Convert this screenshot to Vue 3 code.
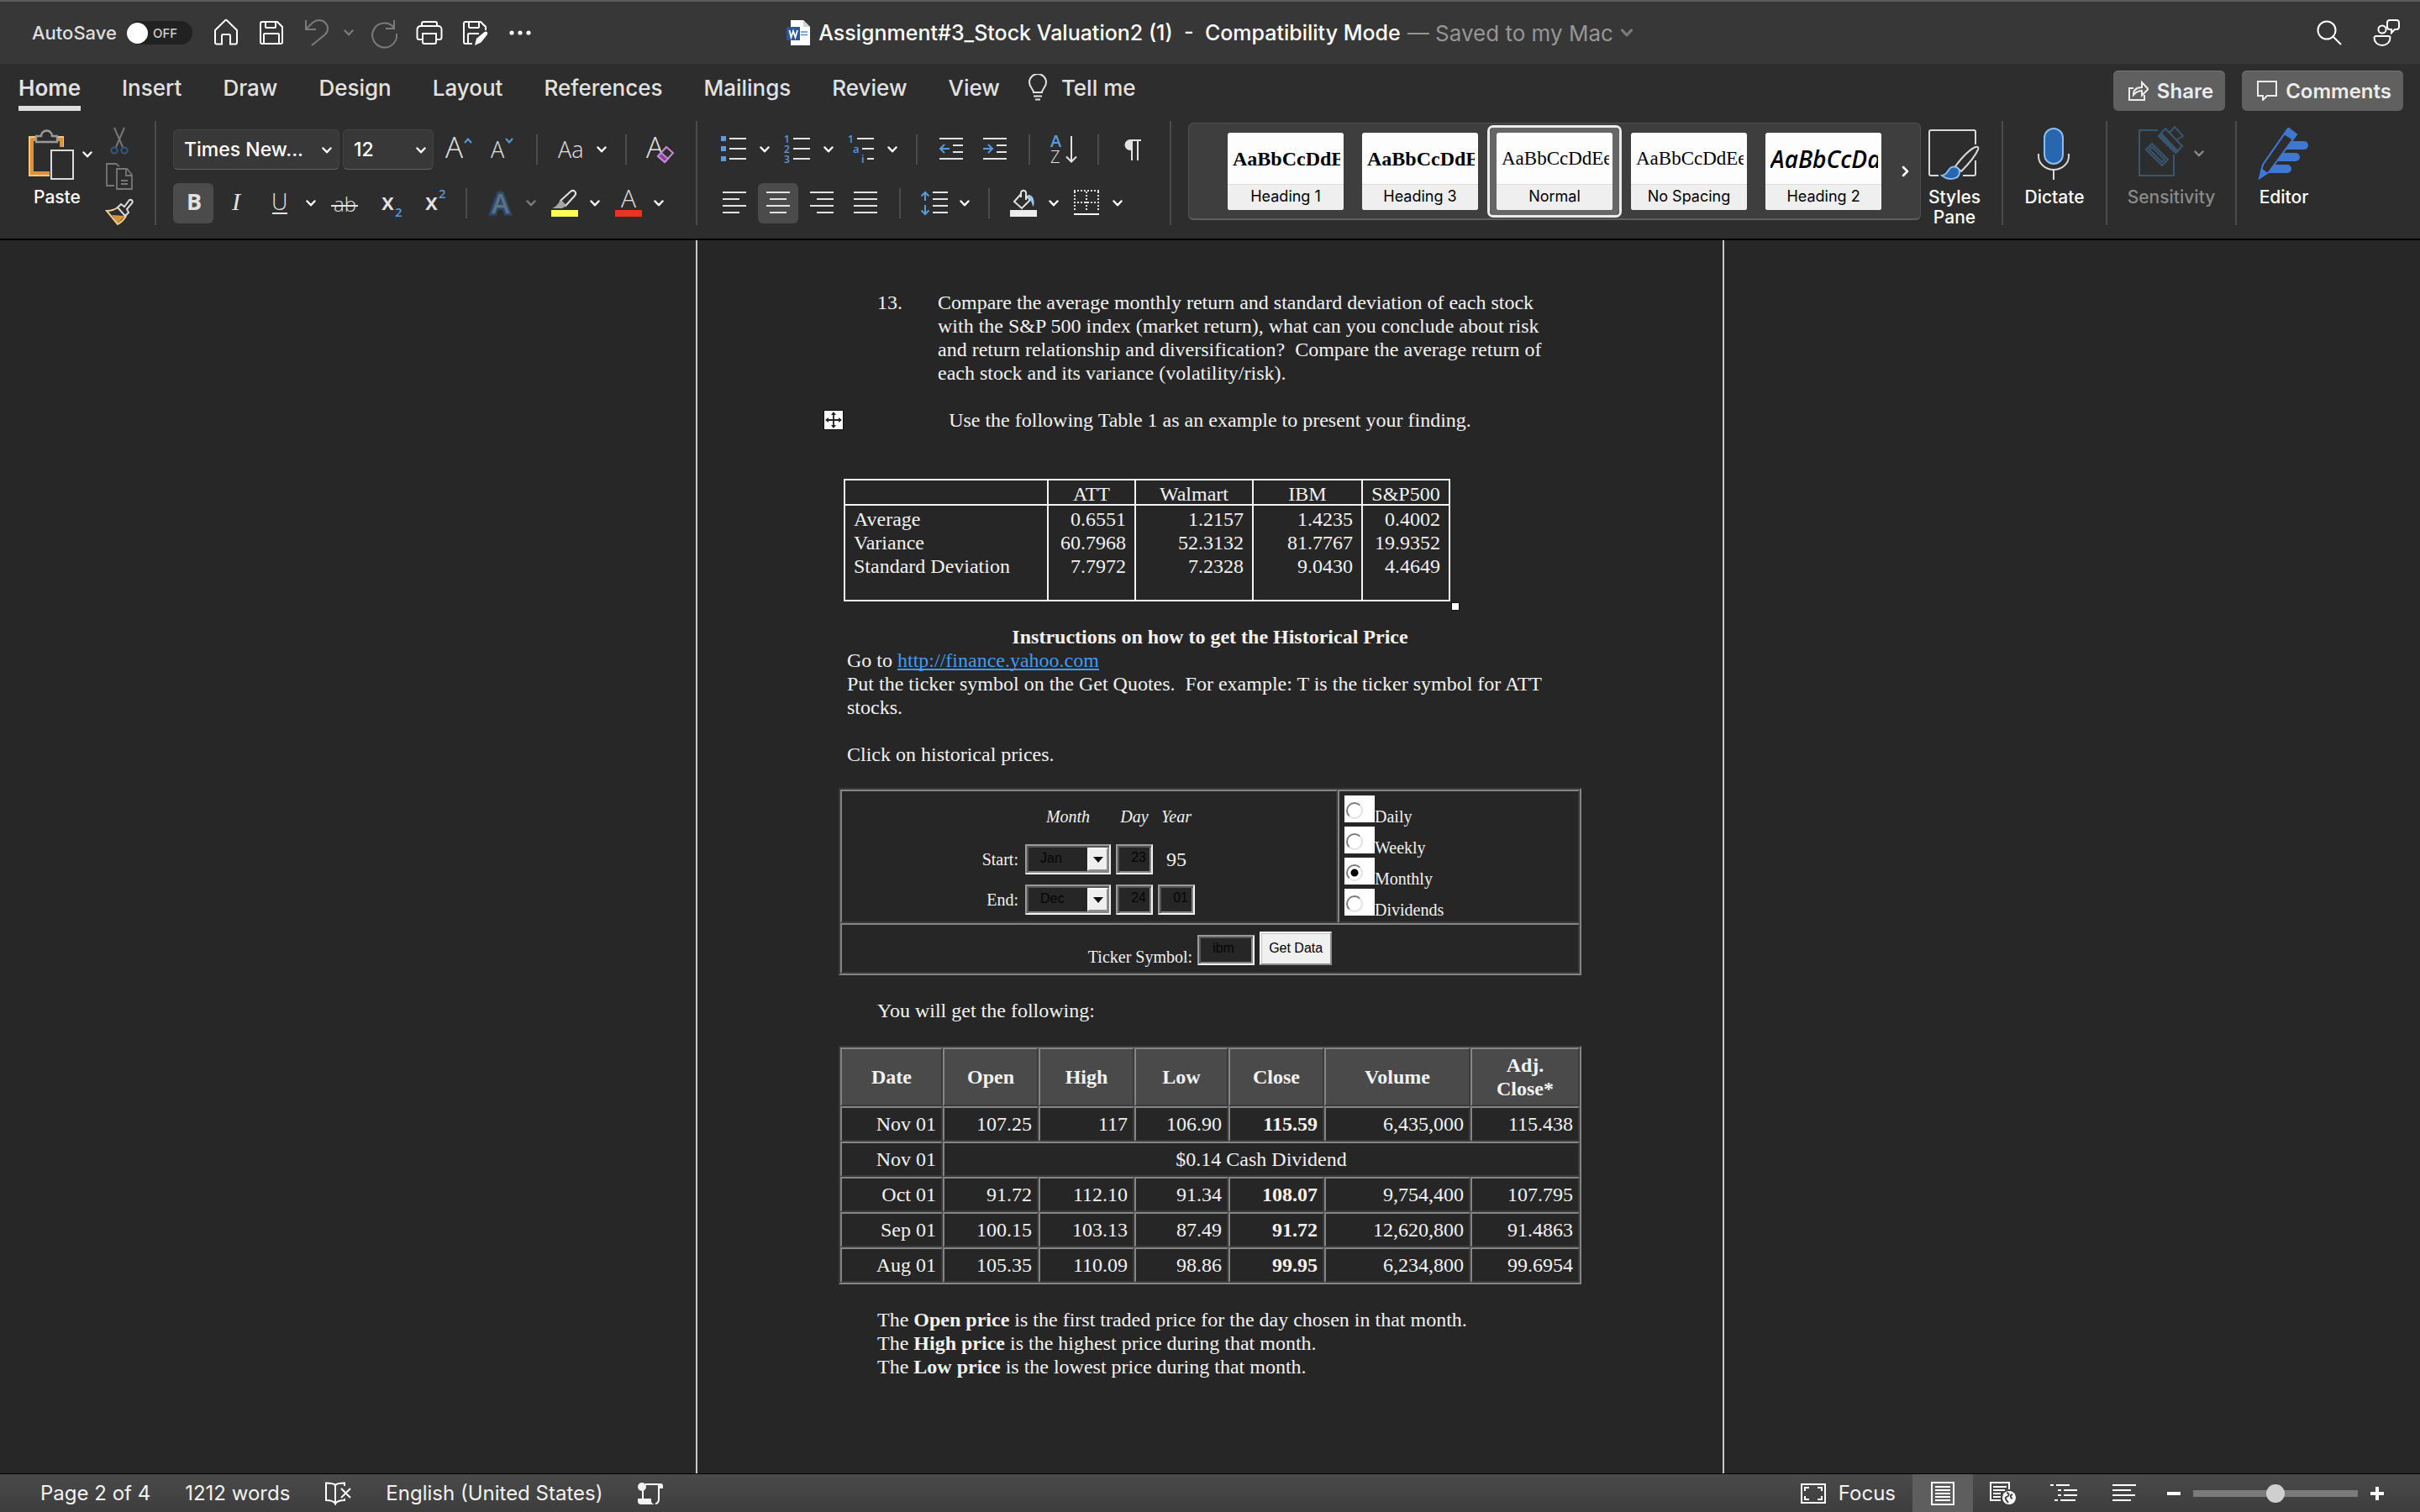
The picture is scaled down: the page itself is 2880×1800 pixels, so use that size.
<template>
  <div class="word">
    <!-- 公共图标 -->
    <svg class="defs" aria-hidden="true">
      <symbol id="chevron" viewBox="0 0 12 8">
        <path d="M1.5 1.5 6 6.3l4.5-4.8" fill="none" stroke="currentColor" stroke-width="2.4" stroke-linecap="round" stroke-linejoin="round" />
      </symbol>
    </svg>

    <!-- 标题栏 -->
    <header class="title-bar">
      <div class="quick-bar">
        <span id="autosave" class="autosave">AutoSave</span>
        <button class="switch" role="switch" aria-checked="false" aria-labelledby="autosave">
          <span class="knob"></span>OFF
        </button>
        <button class="icon-btn" aria-label="Home">
          <svg viewBox="0 0 32 32"><path d="M3 13 14.6 1.6a2 2 0 0 1 2.8 0L29 13v14.5a2 2 0 0 1-2 2h-6V19.5a1.500 1.500 0 0 0-1.500-1.500h-7a1.500 1.500 0 0 0-1.500 1.500v10H5a2 2 0 0 1-2-2z" /></svg>
        </button>
        <button class="icon-btn" aria-label="Save">
          <svg viewBox="0 0 32 32"><path d="M3 5a2 2 0 0 1 2-2h18l6 6v18a2 2 0 0 1-2 2H5a2 2 0 0 1-2-2zM9 3v6a1 1 0 0 0 1 1h10a1 1 0 0 0 1-1V3M7 29V18a1 1 0 0 1 1-1h16a1 1 0 0 1 1 1v11" /></svg>
        </button>
        <button class="icon-btn dim" aria-label="Undo">
          <svg viewBox="0 0 32 32"><path d="M3 1v11h12M3 12l8-8c5-4 11-4 15 0s4 10 0 14L10 31" /></svg>
        </button>
        <svg class="chev dim"><use href="#chevron" /></svg>
        <button class="icon-btn dim" aria-label="Redo">
          <svg viewBox="0 0 32 32"><path d="M28 10A14.500 14.500 0 1 0 31 17M28 1v10H18" /></svg>
        </button>
        <button class="icon-btn" aria-label="Print">
          <svg viewBox="0 0 32 32"><path d="M7 8V5a2 2 0 0 1 2-2h14a2 2 0 0 1 2 2v3M7 24H4a2.500 2.500 0 0 1-2.500-2.500V12A4 4 0 0 1 5.500 8h21a4 4 0 0 1 4 4v9.500A2.500 2.500 0 0 1 28 24h-3M8 17h16v10a2 2 0 0 1-2 2H10a2 2 0 0 1-2-2z" /></svg>
        </button>
        <button class="icon-btn" aria-label="Save as">
          <svg viewBox="0 0 32 32"><path d="M13 29H5a2 2 0 0 1-2-2V5a2 2 0 0 1 2-2h18l6 6v4M9 3v6a1 1 0 0 0 1 1h10a1 1 0 0 0 1-1V3M8 29V18a1 1 0 0 1 1-1h12" /><path d="m16 31 2-8 9.500-8c2-1.500 4.500.5 3.500 3l-7.500 9.500z" fill="currentColor" stroke="none" /></svg>
        </button>
        <button class="icon-btn" aria-label="More">
          <svg viewBox="0 0 32 32"><g fill="currentColor" stroke="none"><circle cx="6" cy="16" r="2.600" /><circle cx="16" cy="16" r="2.600" /><circle cx="26" cy="16" r="2.600" /></g></svg>
        </button>
      </div>

      <div class="doc-title">
        <svg class="doc-icon" viewBox="0 0 28 30">
          <path d="M5 0h15l8 8v22H5z" fill="#fff" />
          <path d="M20 0v8h8z" fill="#cfd3d8" />
          <path d="M17 14h8M17 17.500h8" stroke="#4a90d9" stroke-width="1.500" />
          <rect x="0" y="8" width="16" height="16" fill="#2b579a" />
          <path d="m3.500 12 2 8.500L8 13l2.500 7.500 2.500-8.500" fill="none" stroke="#fff" stroke-width="1.800" />
        </svg>
        <span class="doc-name">Assignment#3_Stock Valuation2 (1)&nbsp; -&nbsp; Compatibility Mode</span>
        <span class="doc-state">— Saved to my Mac</span>
        <svg class="chev wide dim"><use href="#chevron" /></svg>
      </div>

      <div class="title-right">
        <button class="icon-btn" aria-label="Search">
          <svg viewBox="0 0 32 32"><circle cx="13" cy="13" r="10.500" /><path d="m20.500 20.500 9.500 9.500" /></svg>
        </button>
        <button class="icon-btn" aria-label="Account">
          <svg viewBox="0 0 32 32"><circle cx="11" cy="12" r="4.600" /><path d="M3.500 20h15a2 2 0 0 1 2 2c0 5-4 9-9.500 9s-9.500-4-9.500-9a2 2 0 0 1 2-2zM20 1h8a3 3 0 0 1 3 3v5a3 3 0 0 1-3 3h-2l-4 4v-4h-2a3 3 0 0 1-3-3V4a3 3 0 0 1 3-3z" /></svg>
        </button>
      </div>
    </header>

    <!-- 功能区 -->
    <section class="ribbon">
      <nav class="tabs">
        <button v-for="tab in tabs" :key="tab" class="tab" :class="{ active: tab === activeTab }" @click="activeTab = tab">{{ tab }}</button>
        <button class="tab tell-me">
          <svg viewBox="0 0 24 32"><path d="M7 22c0-4-5-6-5-12a10 10 0 0 1 20 0c0 6-5 8-5 12zM7 26.500h10M9 30.500h6" /></svg>Tell me
        </button>
        <div class="tab-actions">
          <button class="action">
            <svg viewBox="0 0 24 24"><path d="M6 9H1v14h18v-6M6 17c0-6 4-9 10-9V2l7.500 8L16 17.500V12c-4 0-7 1.500-10 5z" /></svg>Share
          </button>
          <button class="action">
            <svg viewBox="0 0 24 24"><path d="M1 1h22v17H12l-5 5v-5H1z" /></svg>Comments
          </button>
        </div>
      </nav>

      <div class="groups">
        <div class="group clipboard">
          <div class="paste">
            <div class="paste-top">
              <svg class="paste-icon" viewBox="0 0 54 60">
                <path d="M9 9H1v46h24M34 9h7v12" fill="none" stroke="#f4c97c" stroke-width="2" />
                <path d="M10 12H4v40h21M34 12h5v9" fill="none" stroke="#d9933d" stroke-width="4" />
                <path d="M9 15V8h6a6.500 6.500 0 0 1 13 0h6v7z" fill="#2d2d2d" stroke="#9a9a9a" stroke-width="2.400" />
                <rect x="27" y="25" width="26" height="34" fill="#2d2d2d" stroke="#dcdcdc" stroke-width="2" />
              </svg>
              <svg class="chev-plain"><use href="#chevron" /></svg>
            </div>
            <button class="big-label">Paste</button>
          </div>
          <div class="clip-tools">
            <button class="icon-btn" aria-label="Cut">
              <svg viewBox="0 0 32 32"><path d="m10 1 10 23M22 1 12 24" stroke="#777" /><circle cx="10" cy="28" r="3.600" stroke="#35597d" /><circle cx="22" cy="28" r="3.600" stroke="#35597d" /></svg>
            </button>
            <button class="icon-btn" aria-label="Copy">
              <svg viewBox="0 0 32 32" stroke-width="1.800"><path d="M10 27H1V1h11l4 3M13 7h12l6 7v17H13zM24 7v8h7M18 21h8M18 25h8" stroke="#777" /></svg>
            </button>
            <button class="icon-btn" aria-label="Format painter">
              <svg viewBox="0 0 32 32"><path d="m7 19 16 1-9 9z" fill="#d9933d" stroke="none" /><path d="M14 10C10 13 6 14 1 14l13 16c5-3 8-6 10-10" stroke="#f4d08a" /><path d="m14 10 4-4 4 3 6-8c2-1 5 1 3 4l-6 7 2 4-4 4z" stroke="#dcdcdc" fill="#2d2d2d" /></svg>
            </button>
          </div>
        </div>

        <div class="group font">
          <div class="row">
            <div class="combos">
              <label class="combo family">
                <select aria-label="Font"><option>Times New...</option></select>
                <svg><use href="#chevron" /></svg>
              </label>
              <label class="combo size">
                <select aria-label="Font size"><option>12</option></select>
                <svg><use href="#chevron" /></svg>
              </label>
            </div>
            <button class="icon-btn" aria-label="Increase font size">
              <svg viewBox="0 0 32 32"><text class="glyph" x="0" y="26" font-size="35">A</text><path class="blue" d="m23 8 4-4.500L31 8" /></svg>
            </button>
            <button class="icon-btn" aria-label="Decrease font size">
              <svg viewBox="0 0 32 32"><text class="glyph" x="2" y="26" font-size="27">A</text><path class="blue" d="m20 3 4 4.500L28 3" /></svg>
            </button>
            <i class="sep"></i>
            <button class="icon-btn" aria-label="Change case">
              <svg viewBox="0 0 32 32"><text class="glyph" x="0" y="26" font-size="27">Aa</text></svg>
            </button>
            <svg class="chev"><use href="#chevron" /></svg>
            <i class="sep"></i>
            <button class="icon-btn" aria-label="Clear formatting">
              <svg viewBox="0 0 32 32"><text class="glyph" x="-1" y="26" font-size="35">A</text><path d="m13 24 10-11 8 7-10 11z" stroke="#c48ad0" fill="#2d2d2d" /><path d="m13 24 4-4 8 7-4 4z" fill="#8e3fa3" stroke="#c48ad0" /></svg>
            </button>
          </div>
          <div class="row">
            <button class="icon-btn on" aria-label="Bold">
              <svg viewBox="0 0 32 32"><text class="glyph heavy" x="8" y="24" font-size="27">B</text></svg>
            </button>
            <button class="icon-btn" aria-label="Italic">
              <svg viewBox="0 0 32 32"><text class="glyph serif" x="10" y="24" font-size="30">I</text></svg>
            </button>
            <button class="icon-btn" aria-label="Underline">
              <svg viewBox="0 0 32 32"><text class="glyph" x="5" y="24" font-size="27">U</text><path d="M6 28h18" /></svg>
            </button>
            <svg class="chev"><use href="#chevron" /></svg>
            <button class="icon-btn" aria-label="Strikethrough">
              <svg viewBox="0 0 32 32"><text class="glyph" x="3" y="26" font-size="24">ab</text><path d="M0 19h32" /></svg>
            </button>
            <button class="icon-btn" aria-label="Subscript">
              <svg viewBox="0 0 32 32"><text class="glyph mid" x="8" y="24" font-size="27">x</text><text class="glyph num" x="24" y="32" font-size="15">2</text></svg>
            </button>
            <button class="icon-btn" aria-label="Superscript">
              <svg viewBox="0 0 32 32"><text class="glyph mid" x="8" y="24" font-size="27">x</text><text class="glyph num" x="24" y="10" font-size="15">2</text></svg>
            </button>
            <i class="sep"></i>
            <button class="icon-btn" aria-label="Text effects">
              <svg viewBox="0 0 32 32"><text class="glyph effect" x="5" y="28" font-size="32">A</text></svg>
            </button>
            <svg class="chev dim"><use href="#chevron" /></svg>
            <button class="icon-btn" aria-label="Highlight colour">
              <svg viewBox="0 0 32 32"><path d="M11 13 23 2c4-3 8 1 5 5L17 19z" /><path d="m11 12 7 7-5 3H1c5-2 7-5 10-10z" fill="#a5a5a5" stroke="none" /><rect y="24" width="32" height="8" fill="#fffd54" stroke="none" /></svg>
            </button>
            <svg class="chev"><use href="#chevron" /></svg>
            <button class="icon-btn" aria-label="Font colour">
              <svg viewBox="0 0 32 32"><text class="glyph" x="7" y="21" font-size="30">A</text><rect y="24" width="32" height="8" fill="#e93323" stroke="none" /></svg>
            </button>
            <svg class="chev"><use href="#chevron" /></svg>
          </div>
        </div>

        <div class="group paragraph">
          <div class="row">
            <button class="icon-btn" aria-label="Bullets">
              <svg viewBox="0 0 32 32"><path d="M10 3h20M10 15h20M10 27h20" /><path d="M0 0h6v6H0zM0 12h6v6H0zM0 24h6v6H0z" fill="#5b9bd9" stroke="none" /></svg>
            </button>
            <svg class="chev"><use href="#chevron" /></svg>
            <button class="icon-btn" aria-label="Numbering">
              <svg viewBox="0 0 32 32"><path d="M10 3h20M10 15h20M10 27h20" /><text class="glyph num" x="-1" y="8" font-size="12">1</text><text class="glyph num" x="-1" y="20" font-size="12">2</text><text class="glyph num" x="-1" y="32" font-size="12">3</text></svg>
            </button>
            <svg class="chev"><use href="#chevron" /></svg>
            <button class="icon-btn" aria-label="Multilevel list">
              <svg viewBox="0 0 32 32"><path d="M10 3h20M16 15h14M22 27h8" /><text class="glyph num" x="-1" y="8" font-size="12">1</text><text class="glyph num" x="5" y="20" font-size="13">a</text><text class="glyph num" x="15" y="32" font-size="13">i</text></svg>
            </button>
            <svg class="chev"><use href="#chevron" /></svg>
            <i class="sep"></i>
            <button class="icon-btn" aria-label="Decrease indent">
              <svg viewBox="0 0 32 32"><path d="M2 3h28M18 11h12M18 19h12M2 27h28" /><path class="blue" d="M14 15H3M8 10l-5 5 5 5" /></svg>
            </button>
            <button class="icon-btn" aria-label="Increase indent">
              <svg viewBox="0 0 32 32"><path d="M2 3h28M18 11h12M18 19h12M2 27h28" /><path class="blue" d="M2 15h11M8 10l5 5-5 5" /></svg>
            </button>
            <i class="sep"></i>
            <button class="icon-btn" aria-label="Sort">
              <svg viewBox="0 0 32 32"><text class="glyph num" x="0" y="13" font-size="20">A</text><text class="glyph" x="0" y="32" font-size="20">Z</text><path d="M25 0v30M19 24.500l6 6 6-6" /></svg>
            </button>
            <i class="sep"></i>
            <button class="icon-btn" aria-label="Show formatting marks">
              <svg viewBox="0 0 32 32"><path d="M15 5v24M22 5v24M13 5h13" /><path d="M15 4h-2a6.500 6.500 0 0 0 0 13h2z" fill="currentColor" stroke="none" /></svg>
            </button>
          </div>
          <div class="row">
            <button class="icon-btn" aria-label="Align left">
              <svg viewBox="0 0 32 32"><path d="M2 3h28M2 11h20M2 19h28M2 27h20" /></svg>
            </button>
            <button class="icon-btn on" aria-label="Centre">
              <svg viewBox="0 0 32 32"><path d="M2 3h28M6 11h20M2 19h28M6 27h20" /></svg>
            </button>
            <button class="icon-btn" aria-label="Align right">
              <svg viewBox="0 0 32 32"><path d="M2 3h28M10 11h20M2 19h28M10 27h20" /></svg>
            </button>
            <button class="icon-btn" aria-label="Justify">
              <svg viewBox="0 0 32 32"><path d="M2 3h28M2 11h28M2 19h28M2 27h28" /></svg>
            </button>
            <i class="sep"></i>
            <button class="icon-btn" aria-label="Line spacing">
              <svg viewBox="0 0 32 32"><path d="M14 3h18M14 11h18M14 19h18M14 27h18" /><path class="blue" d="M5 13V3M.5 7.500 5 3l4.500 4.500M5 18v11M.5 24.500 5 29l4.500-4.500" /></svg>
            </button>
            <svg class="chev"><use href="#chevron" /></svg>
            <i class="sep"></i>
            <button class="icon-btn" aria-label="Shading">
              <svg viewBox="0 0 32 32"><path d="M13 5 5 14l9 8 10-10-5-5M13 9V3c1-3 5-3 6 0v9" /><path d="M21 6c6-1 9 6 7 14-3-3-1-8-7-10z" fill="#9cc3ea" stroke="none" /><rect y="24" width="32" height="8" fill="#ececec" stroke="none" /></svg>
            </button>
            <svg class="chev"><use href="#chevron" /></svg>
            <button class="icon-btn" aria-label="Borders">
              <svg viewBox="0 0 32 32"><path d="M0 1h30M0 15h30M1 2v24M15 2v24M29 2v24" stroke-dasharray="2 2" /><path d="M0 29h30" stroke="#fff" /></svg>
            </button>
            <svg class="chev"><use href="#chevron" /></svg>
          </div>
        </div>

        <div class="gallery">
          <button v-for="item in styles" :key="item.name" class="style-card" :class="[item.kind, { selected: item.name === 'Normal' }]">
            <span class="sample">AaBbCcDdEe</span>
            <span class="style-name">{{ item.name }}</span>
          </button>
          <button class="gallery-next" aria-label="More styles">
            <svg viewBox="0 0 10 14"><path d="m2 2 5 5-5 5" fill="none" stroke="#fff" stroke-width="2.600" stroke-linecap="round" stroke-linejoin="round" /></svg>
          </button>
        </div>

        <button class="big-tool pane">
          <svg viewBox="0 0 62 60">
            <path d="M56 18V3a2 2 0 0 0-2-2H3a2 2 0 0 0-2 2v50a2 2 0 0 0 2 2h9M41 55h13a2 2 0 0 0 2-2V37" />
            <path d="M32 44C41 32 49 24 56 21c3-1 4 1 3 3-3 7-11 17-20 26z" fill="#2d2d2d" />
            <path d="M16 55c6-1 6-4 9-8 4-5 12-2 12 4 0 8-12 11-21 4z" fill="#2866b0" stroke="#8bbcf0" />
          </svg>
          <span>Styles<br>Pane</span>
        </button>
        <button class="big-tool dictate">
          <svg viewBox="0 0 62 60">
            <rect x="19" y="-1" width="22" height="42" rx="11" fill="#2866b0" stroke="#8bbcf0" />
            <path d="M12 29v3a18 16 0 0 0 36 0v-3M30 48v12" />
          </svg>
          <span>Dictate</span>
        </button>
        <button class="big-tool sensitivity">
          <span class="with-chev">
            <svg viewBox="0 0 54 60" stroke="#3a556e">
              <path d="M23 1H1v54h41V30" />
              <path d="m9 24 7-7 19 19-7 7zM13 24l3-3 15 15-3 3z" />
              <path d="M24 8 32-1l20 21-8 8zM37 4l6-7 10 11-7 4" />
              <path d="m24 8 4-2 19 20-3 2z" fill="#3a556e" />
            </svg>
            <svg class="chev-plain"><use href="#chevron" /></svg>
          </span>
          <span>Sensitivity</span>
        </button>
        <button class="big-tool editor">
          <svg viewBox="0 0 62 60">
            <path d="M37 14h18a5 5 0 0 1 0 10H30zM28 28h17a5 5 0 0 1 0 10H21zM18 42h17a5 5 0 0 1 0 10H12z" fill="#3f78d0" stroke="none" />
            <path d="M2 58 6 42 36-1l10 7-33 45z" fill="#2d2d2d" stroke="#3f78d0" />
            <path d="m31 6 6-8 10 8-5 7zM1 60l3-14 8 6z" fill="#3f78d0" stroke="none" />
          </svg>
          <span>Editor</span>
        </button>
      </div>
    </section>

    <!-- 文档区域 -->
    <main class="canvas">
      <article class="page">
        <div class="question">
          <span>13.</span>
          <p>
            Compare the average monthly return and standard deviation of each stock<br>
            with the S&amp;P 500 index (market return), what can you conclude about risk<br>
            and return relationship and diversification?&nbsp; Compare the average return of<br>
            each stock and its variance (volatility/risk).
          </p>
        </div>

        <p class="table-lead">
          <svg class="move-handle" viewBox="0 0 24 24">
            <rect x=".5" y=".5" width="23" height="23" fill="#fff" stroke="#111" />
            <path d="M12 4v16M4 12h16" stroke="#222" stroke-width="1.800" />
            <path d="m12 2 3 4H9zM12 22l3-4H9zM2 12l4-3v6zM22 12l-4-3v6z" fill="#222" />
          </svg>
          Use the following Table 1 as an example to present your finding.
        </p>

        <div class="stats-wrap">
          <table class="stats">
            <colgroup><col class="c-label"><col class="c-att"><col class="c-wal"><col class="c-ibm"><col class="c-att"></colgroup>
            <thead>
              <tr><th></th><th>ATT</th><th>Walmart</th><th>IBM</th><th>S&amp;P500</th></tr>
            </thead>
            <tbody>
              <tr v-for="row in stats" :key="row[0]">
                <td v-for="cell in row" :key="cell">{{ cell }}</td>
              </tr>
            </tbody>
          </table>
          <i class="resize-handle"></i>
        </div>

        <h2>Instructions on how to get the Historical Price</h2>
        <p>Go to <a href="http://finance.yahoo.com">http://finance.yahoo.com</a></p>
        <p>Put the ticker symbol on the Get Quotes.&nbsp; For example: T is the ticker symbol for ATT<br>stocks.</p>
        <p class="click">Click on historical prices.</p>

        <!-- 历史价格查询表单 -->
        <form class="query" @submit.prevent>
          <div class="cell dates">
            <em></em><em>Month</em><em>Day</em><em>Year</em>
            <label for="start-month">Start:</label>
            <span class="drop"><select id="start-month"><option>Jan</option></select><i></i></span>
            <input value="23" aria-label="Start day">
            <span class="year">95</span>
            <label for="end-month">End:</label>
            <span class="drop"><select id="end-month"><option>Dec</option></select><i></i></span>
            <input value="24" aria-label="End day">
            <input value="01" aria-label="End year">
          </div>
          <div class="cell periods">
            <label v-for="p in periods" :key="p">
              <input v-model="period" type="radio" name="period" :value="p">{{ p }}
            </label>
          </div>
          <div class="cell ticker">
            <label for="ticker">Ticker Symbol:</label>
            <input id="ticker" value="ibm">
            <button>Get Data</button>
          </div>
        </form>

        <p class="indent">You will get the following:</p>

        <table class="prices">
          <colgroup><col v-for="n in 7" :key="n" :class="'p' + n"></colgroup>
          <thead>
            <tr><th>Date</th><th>Open</th><th>High</th><th>Low</th><th>Close</th><th>Volume</th><th>Adj.<br>Close*</th></tr>
          </thead>
          <tbody>
            <tr v-for="(row, i) in prices" :key="i">
              <template v-if="row.length > 2">
                <td v-for="(cell, j) in row" :key="j" :class="{ close: j === 4 }">{{ cell }}</td>
              </template>
              <template v-else>
                <td>{{ row[0] }}</td>
                <td class="dividend" colspan="6">{{ row[1] }}</td>
              </template>
            </tr>
          </tbody>
        </table>

        <p class="indent">
          The <b>Open price</b> is the first traded price for the day chosen in that month.<br>
          The <b>High price</b> is the highest price during that month.<br>
          The <b>Low price</b> is the lowest price during that month.
        </p>
      </article>
    </main>

    <!-- 状态栏 -->
    <footer class="status">
      <div class="status-left">
        <span>Page 2 of 4</span>
        <span>1212 words</span>
        <svg viewBox="0 0 32 28"><path d="M13 26V4c-2-2-7-2.500-11-2.500V22c5 0 9 .5 11 4zM13 4c2-2 6-2.500 11-2.500V5M13 26c2-3 5-4 11-4v-2M20 8l11 11M31 8 20 19" /></svg>
        <span>English (United States)</span>
        <svg viewBox="0 0 32 28"><path d="M7 10v12M10 3h16v17c0 3-1 6-4 6" /><circle cx="6" cy="6" r="5" fill="currentColor" stroke="none" /><path d="M24 2h4a3 3 0 0 1 3 3v3h-5zM1 20h16v3c0 2 2 4 5 4H5a4 4 0 0 1-4-4z" fill="currentColor" stroke="none" /></svg>
      </div>
      <div class="status-right">
        <button class="focus">
          <svg viewBox="0 0 32 24"><path d="M2 1h28v22H2zM6 9V5h5M21 5h5v4M26 15v4h-5M11 19H6v-4" /></svg>Focus
        </button>
        <button class="view on" aria-label="Print layout">
          <svg viewBox="0 0 32 28"><path d="M3 1h26v26H3zM7 6h18M7 10h18M7 14h18M7 18h18M7 22h18" /></svg>
        </button>
        <button class="view" aria-label="Web layout">
          <svg viewBox="0 0 32 28"><path d="M13 22H1V1h22v8M4 6h16M4 10h14M4 14h9M4 18h9" /><circle cx="23" cy="19" r="8" fill="#fff" stroke="none" /><path d="M20 13c4 1 3 4 0 5s0 4 2 7M27 15c-3 1-3 4 0 5" stroke="#444" /></svg>
        </button>
        <button class="view" aria-label="Outline">
          <svg viewBox="0 0 32 28"><path d="M0 4h4M7 4h16M9 10h4M16 10h16M9 16h4M16 16h16M5 22h4M12 22h18" /></svg>
        </button>
        <button class="view" aria-label="Draft">
          <svg viewBox="0 0 32 28"><path d="M2 4h28M2 10h22M2 16h27M2 22h22" /></svg>
        </button>
        <div class="zoom-box">
          <button class="zoom-btn" aria-label="Zoom out"><svg viewBox="0 0 18 18"><path d="M1 9h16" /></svg></button>
          <input v-model="zoom" class="zoom" type="range" min="0" max="100" aria-label="Zoom">
          <button class="zoom-btn" aria-label="Zoom in"><svg viewBox="0 0 18 18"><path d="M1 9h16M9 1v16" /></svg></button>
        </div>
      </div>
    </footer>
  </div>
</template>

<script setup>
import { ref } from 'vue'

const tabs = ['Home', 'Insert', 'Draw', 'Design', 'Layout', 'References', 'Mailings', 'Review', 'View']
const activeTab = ref('Home')

const styles = [
  { name: 'Heading 1', kind: 'bold' },
  { name: 'Heading 3', kind: 'bold' },
  { name: 'Normal', kind: 'plain' },
  { name: 'No Spacing', kind: 'plain' },
  { name: 'Heading 2', kind: 'slanted' }
]

const stats = [
  ['Average', '0.6551', '1.2157', '1.4235', '0.4002'],
  ['Variance', '60.7968', '52.3132', '81.7767', '19.9352'],
  ['Standard Deviation', '7.7972', '7.2328', '9.0430', '4.4649']
]

const periods = ['Daily', 'Weekly', 'Monthly', 'Dividends']
const period = ref('Monthly')

// 两列的行为分红记录
const prices = [
  ['Nov 01', '107.25', '117', '106.90', '115.59', '6,435,000', '115.438'],
  ['Nov 01', '$0.14 Cash Dividend'],
  ['Oct 01', '91.72', '112.10', '91.34', '108.07', '9,754,400', '107.795'],
  ['Sep 01', '100.15', '103.13', '87.49', '91.72', '12,620,800', '91.4863'],
  ['Aug 01', '105.35', '110.09', '98.86', '99.95', '6,234,800', '99.6954']
]

const zoom = ref(50)
</script>

<style>
body {
  background: #262626;
}
</style>

<style scoped>
* {
  box-sizing: border-box;
}

.word {
  display: flex;
  flex-direction: column;
  height: 100vh;
  overflow: hidden;
  background: #272727;
  color: #e2e2e2;
  font-family: Inter, 'Liberation Sans', sans-serif;
  font-size: 26px;
}

.defs {
  position: absolute;
  width: 0;
  height: 0;
}

button {
  padding: 0;
  border: none;
  background: none;
  color: inherit;
  font: inherit;
}

svg {
  display: block;
  flex-shrink: 0;
}

/* 标题栏 */
.title-bar {
  display: grid;
  grid-template-columns: 1fr auto 1fr;
  align-items: center;
  height: 76px;
  border-top: 2px solid #5c5c5c;
  background: #373737;
  color: #fff;
}

.quick-bar {
  display: flex;
  align-items: center;
  gap: 22px;
  padding-left: 38px;
}

.autosave {
  color: #dedede;
  font-size: 22px;
  font-weight: 500;
}

.switch {
  display: flex;
  align-items: center;
  gap: 6px;
  width: 78px;
  height: 28px;
  margin: 0 2px 0 -10px;
  border-radius: 14px;
  background: #212121;
  color: #d0d0d0;
  font-size: 15px;
  font-weight: 500;
}

.knob {
  width: 25px;
  height: 25px;
  border-radius: 50%;
  background: #fff;
}

.icon-btn svg {
  width: 32px;
  height: 32px;
  fill: none;
  stroke: currentColor;
  overflow: visible;
}

.icon-btn svg:not([stroke-width]) {
  stroke-width: 2;
}

/* 图标中的字母 */
.glyph {
  fill: currentColor;
  stroke: none;
  font-family: 'Open Sans', sans-serif;
  font-weight: 300;
}

.glyph.heavy {
  font-weight: 700;
}

.glyph.mid {
  font-weight: 600;
}

.glyph.serif {
  font-family: 'Liberation Serif', serif;
  font-style: italic;
  font-weight: 400;
}

.glyph.num {
  fill: #5b9bd9;
  font-weight: 600;
}

.glyph.effect {
  fill: #5f7180;
  stroke: #2a4a6e;
  stroke-width: 5px;
  paint-order: stroke;
  font-weight: 600;
}

.dim {
  color: #7b7b7b;
}

.chev {
  width: 12px;
  height: 8px;
  margin: 0 -2px 0 -6px;
}

.chev.wide {
  width: 16px;
  height: 10px;
  margin: 0;
}

.chev-plain {
  width: 12px;
  height: 8px;
}

.doc-title {
  display: flex;
  align-items: center;
  gap: 8px;
}

.doc-icon {
  width: 28px;
  height: 30px;
  margin-right: 2px;
}

.doc-name {
  font-size: 25px;
  font-weight: 500;
}

.doc-state {
  color: #969696;
}

.title-right {
  display: flex;
  justify-content: flex-end;
  gap: 36px;
  padding-right: 24px;
}

/* 功能区 */
.ribbon {
  border-bottom: 2px solid #000;
  background: #2d2d2d;
}

.tabs {
  display: flex;
  align-items: flex-start;
  height: 68px;
  padding: 8px 20px 0 22px;
  gap: 49px;
}

.tab {
  height: 48px;
  padding-bottom: 2px;
  border-bottom: 6px solid transparent;
  font-weight: 500;
  white-space: nowrap;
}

.tab.active {
  border-image: linear-gradient(#dedede, #dedede) 1;
  font-weight: 600;
}

.tell-me {
  display: flex;
  align-items: center;
  gap: 16px;
  margin-left: -16px;
}

.tell-me svg {
  width: 24px;
  height: 32px;
  fill: none;
  stroke: currentColor;
  stroke-width: 2;
}

.tab-actions {
  display: flex;
  gap: 20px;
  margin-left: auto;
}

.action {
  display: flex;
  align-items: center;
  gap: 10px;
  height: 48px;
  padding: 0 14px 0 18px;
  border-radius: 6px;
  background: #606060;
  box-shadow: inset 0 1px #757575;
  color: #ececec;
  font-size: 24px;
  font-weight: 600;
}

.action svg {
  width: 24px;
  height: 24px;
  fill: none;
  stroke: currentColor;
  stroke-width: 2;
}

.groups {
  display: flex;
  height: 140px;
}

.group {
  position: relative;
  height: 124px;
  padding-top: 10px;
  border-right: 2px solid #4b4b4b;
}

.clipboard {
  display: flex;
  gap: 16px;
  padding-left: 34px;
  padding-right: 26px;
}

.paste-top {
  display: flex;
  align-items: center;
  gap: 10px;
}

.paste-icon {
  width: 54px;
  height: 60px;
}

.big-label {
  margin: 9px 0 0 6px;
  color: #fff;
  font-size: 21px;
  font-weight: 500;
  line-height: 24px;
}

.clip-tools {
  display: flex;
  flex-direction: column;
  gap: 11px;
  margin-top: -3px;
}

.font {
  padding-left: 20px;
  padding-right: 26px;
}

.paragraph {
  padding-left: 28px;
  padding-right: 28px;
}

.row {
  display: flex;
  align-items: center;
  gap: 20px;
  height: 48px;
  margin-bottom: 16px;
}

.row .icon-btn.on {
  height: 48px;
  margin: 0 -8px;
  padding: 0 8px;
  border-radius: 6px;
  background: #4b4b4b;
}

.row .chev:not(.dim),
.paste .chev-plain {
  color: #fff;
}

.font .row:last-child .icon-btn.on:first-child {
  margin-left: 0;
}

.blue {
  stroke: #5b9bd9;
}

.sep {
  width: 2px;
  height: 36px;
  margin: 0 4px;
  background: #4b4b4b;
}

.combos {
  display: flex;
  gap: 4px;
  margin-right: -6px;
}

.combo {
  position: relative;
}

.combo select {
  width: 100%;
  height: 48px;
  padding: 0 12px;
  appearance: none;
  border: 1px solid #444;
  border-bottom-color: #636363;
  border-radius: 6px;
  background: #383838;
  color: #fff;
  font-family: inherit;
  font-size: 23px;
  font-weight: 500;
}

.combo svg {
  position: absolute;
  top: 21px;
  right: 9px;
  width: 12px;
  height: 8px;
  color: #fff;
}

.family {
  width: 198px;
}

.size {
  width: 108px;
}

/* 样式库 */
.gallery {
  display: flex;
  align-items: center;
  gap: 22px;
  height: 116px;
  margin: 2px 0 0 20px;
  padding: 0 12px 0 46px;
  border: 1px solid #505050;
  border-bottom: 2px solid #5e5e5e;
  border-radius: 6px;
  background: #3e3e3e;
}

.style-card {
  position: relative;
  display: flex;
  flex-direction: column;
  width: 138px;
  height: 92px;
  border-radius: 3px;
  background: #fdfdfd;
  color: #000;
  text-align: left;
}

.style-card.selected {
  box-shadow: 0 0 0 8px #666;
}

.style-card.selected::after {
  position: absolute;
  inset: -9px -11px;
  border: 3px solid #ececec;
  border-radius: 7px;
  content: '';
}

.sample {
  height: 61px;
  margin: 0 4px 0 6px;
  overflow: hidden;
  font-family: 'Liberation Serif', serif;
  font-size: 23px;
  line-height: 62px;
}

.bold .sample {
  font-size: 24px;
  font-weight: 700;
}

.slanted .sample {
  font-family: 'Open Sans', sans-serif;
  font-size: 28px;
  font-style: italic;
  font-weight: 600;
}

.style-name {
  height: 31px;
  border-top: 1px solid #dcdcdc;
  border-radius: 0 0 3px 3px;
  background: #efefef;
  font-size: 18px;
  line-height: 28px;
  text-align: center;
}

.gallery-next svg {
  width: 10px;
  height: 14px;
  margin-left: 2px;
}

.big-tool {
  display: flex;
  flex-direction: column;
  align-items: center;
  height: 124px;
  padding-top: 10px;
  border-right: 2px solid #4b4b4b;
  color: #fff;
  font-size: 21px;
  font-weight: 500;
  line-height: 24px;
}

.big-tool > svg,
.with-chev > svg:first-child {
  width: 62px;
  height: 60px;
  margin-bottom: 9px;
  fill: none;
  stroke-width: 2;
  overflow: visible;
}

.big-tool > svg {
  stroke: #d8d8d8;
}

.with-chev {
  display: flex;
  gap: 12px;
}

.with-chev > svg:first-child {
  width: 54px;
}

.with-chev .chev-plain {
  margin-top: 25px;
}

.pane {
  width: 98px;
  padding-right: 16px;
}

.dictate {
  width: 124px;
}

.sensitivity {
  width: 154px;
  color: #8a8a8a;
}

.editor {
  width: 112px;
  border-right: none;
}

/* 文档区域 */
.canvas {
  flex: 1;
  min-height: 0;
  overflow: hidden;
}

.page {
  width: 1224px;
  min-height: 100%;
  margin: 0 auto;
  padding: 60px 178px 0;
  border: solid #c9c9c9;
  border-width: 0 2px;
  background: #262626;
  color: #f2f2f2;
  font-family: 'Liberation Serif', serif;
  font-size: 24px;
  line-height: 28px;
}

.page p {
  margin: 0;
}

.question {
  display: grid;
  grid-template-columns: 72px 1fr;
  padding-left: 36px;
  white-space: nowrap;
}

.page .table-lead {
  position: relative;
  margin: 28px 0 56px;
  text-align: center;
}

.move-handle {
  position: absolute;
  top: 2px;
  left: -28px;
  width: 24px;
  height: 24px;
}

.stats-wrap {
  position: relative;
  width: 722px;
  margin-left: -4px;
}

.resize-handle {
  position: absolute;
  right: -11px;
  bottom: -11px;
  width: 10px;
  height: 10px;
  border: 1px solid #111;
  background: #fff;
}

.stats {
  width: 100%;
  table-layout: fixed;
  border-collapse: collapse;
}

.c-label {
  width: 242px;
}

.c-att {
  width: 104px;
}

.c-wal {
  width: 140px;
}

.c-ibm {
  width: 130px;
}

.stats th {
  padding: 4px 0 0;
  border: 2px solid #f4f4f4;
  font-weight: 400;
  line-height: 24px;
}

.stats td {
  padding: 0 10px;
  border: solid #f4f4f4;
  border-width: 0 2px;
  text-align: right;
}

.stats td:first-child {
  text-align: left;
}

.stats tbody tr:first-child td {
  padding-top: 2px;
}

.stats tbody tr:last-child td {
  padding-bottom: 26px;
  border-bottom-width: 2px;
}

.page h2 {
  margin: 28px 0 0;
  font-size: 24px;
  line-height: 28px;
  text-align: center;
}

.page a {
  color: #3f9bf3;
  text-decoration-thickness: 2px;
  text-decoration-skip-ink: none;
  text-underline-offset: 2px;
}

.page .click {
  margin: 28px 0 26px;
}

/* 查询表单 */
.query {
  display: grid;
  grid-template-columns: 592px 1fr;
  margin: 0 -10px 28px;
  border: 2px solid #3a3a3a;
  border-right-color: #858585;
  border-bottom-color: #858585;
  font-size: 20px;
  line-height: 24px;
}

.cell {
  border: 2px solid #858585;
  border-right-color: #3a3a3a;
  border-bottom-color: #3a3a3a;
}

.dates {
  display: grid;
  grid-template-columns: 212px 102px 44px 44px;
  gap: 12px 6px;
  align-items: center;
  padding: 18px 0 8px;
}

.dates em {
  height: 33px;
  text-align: center;
}

.dates label {
  padding-right: 2px;
  text-align: right;
}

.year {
  font-size: 24px;
  text-align: center;
}

.drop {
  position: relative;
}

.drop i {
  position: absolute;
  top: 4px;
  right: 3px;
  display: flex;
  align-items: center;
  justify-content: center;
  width: 25px;
  height: 28px;
  border: 2px solid #fff;
  border-right-color: #8c8c8c;
  border-bottom-color: #8c8c8c;
  background: #efefef;
  pointer-events: none;
}

.drop i::after {
  border: 6px solid transparent;
  border-top: 7px solid #111;
  border-bottom: none;
  content: '';
}

.query select,
.dates input,
.ticker input {
  display: block;
  width: 100%;
  height: 36px;
  padding: 0 6px 4px;
  appearance: none;
  border: 2px solid #9a9a9a;
  border-right-color: #f4f4f4;
  border-bottom-color: #f4f4f4;
  border-radius: 0;
  background: #262626;
  box-shadow: inset 2px 2px #555, inset -2px -2px #858585;
  color: #050505;
  font-family: 'Liberation Sans', sans-serif;
  font-size: 16px;
  text-align: right;
}

.query select {
  padding-left: 16px;
  text-align: left;
}

.periods {
  display: flex;
  flex-direction: column;
  gap: 5px;
  padding: 5px 6px 0;
}

.periods label {
  display: flex;
  align-items: baseline;
  height: 32px;
}

.periods input {
  width: 36px;
  height: 32px;
  margin: 0;
  padding: 8px 2px;
  appearance: none;
  background: #fff;
}

.periods input::before {
  display: block;
  width: 16px;
  height: 16px;
  border: 2px solid #7c7c7c;
  border-right-color: #e2e2e2;
  border-bottom-color: #e2e2e2;
  border-radius: 50%;
  content: '';
}

.periods input:checked::before {
  background: radial-gradient(circle, #000 4px, #fff 5px);
}

.ticker {
  display: flex;
  grid-column: span 2;
  align-items: flex-end;
  justify-content: center;
  gap: 6px;
  height: 60px;
  padding-bottom: 8px;
}

.ticker label {
  line-height: 20px;
}

.ticker input {
  width: 68px;
  padding-left: 16px;
  text-align: left;
}

.ticker button {
  width: 86px;
  height: 40px;
  border: 2px solid #fff;
  border-right-color: #8c8c8c;
  border-bottom-color: #8c8c8c;
  background: #f0f0f0;
  box-shadow: inset 1px 1px #c4c4c4;
  color: #000;
  font-family: 'Liberation Sans', sans-serif;
  font-size: 16px;
}

.indent {
  padding-left: 36px;
}

/* 价格表 */
.prices {
  width: 884px;
  margin: 28px -10px;
  table-layout: fixed;
  border: 2px solid #3a3a3a;
  border-right-color: #858585;
  border-bottom-color: #858585;
  border-spacing: 0;
}

.p1 {
  width: 122px;
}

.p2,
.p3,
.p5 {
  width: 114px;
}

.p4 {
  width: 112px;
}

.p6 {
  width: 174px;
}

.p7 {
  width: 130px;
}

.prices th,
.prices td {
  padding: 5px 6px;
  border: 2px solid #858585;
  border-right-color: #3a3a3a;
  border-bottom-color: #3a3a3a;
  text-align: right;
}

.prices th {
  background: #4a4a4a;
  text-align: center;
}

.prices .close {
  font-weight: 700;
}

.prices .dividend {
  text-align: center;
}

/* 状态栏 */
.status {
  display: flex;
  align-items: stretch;
  justify-content: space-between;
  height: 46px;
  border-top: 1px solid #000;
  background: linear-gradient(#4a4a4a, #3d3d3d);
  color: #f2f2f2;
  font-size: 24px;
}

.status svg {
  width: 32px;
  height: 28px;
  fill: none;
  stroke: #fff;
  stroke-width: 2;
}

.status-left {
  display: flex;
  align-items: center;
  gap: 41px;
  padding-left: 48px;
}

.status-right {
  display: flex;
  align-items: center;
  padding-right: 42px;
}

.focus {
  display: flex;
  align-items: center;
  gap: 14px;
  margin-right: 20px;
}

.focus svg {
  height: 24px;
}

.view {
  display: flex;
  align-items: center;
  justify-content: center;
  align-self: stretch;
  width: 72px;
}

.view.on {
  background: #5e5e5e;
}

.zoom-box {
  display: flex;
  align-items: center;
  gap: 14px;
  margin-left: 14px;
}

.zoom-btn svg {
  width: 18px;
  height: 18px;
  stroke-width: 4;
}

.zoom {
  width: 196px;
  height: 22px;
  margin: 0;
  appearance: none;
  border-radius: 4px;
  background: linear-gradient(#7b7b7b, #7b7b7b) center / 100% 8px no-repeat;
}

.zoom::-webkit-slider-thumb {
  width: 22px;
  height: 22px;
  appearance: none;
  border-radius: 50%;
  background: #cfcfcf;
}
</style>
